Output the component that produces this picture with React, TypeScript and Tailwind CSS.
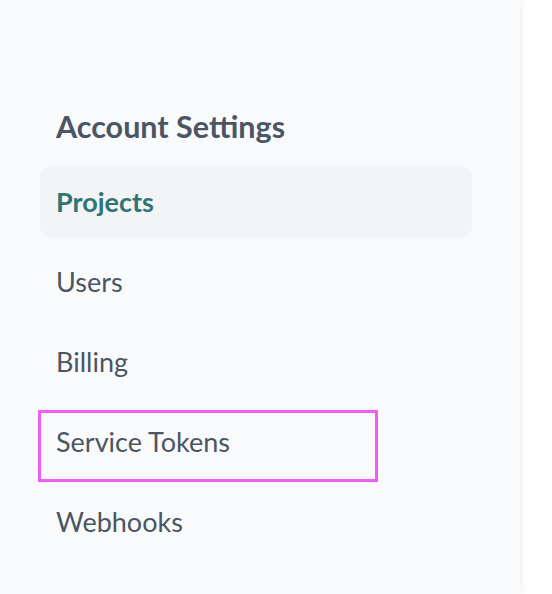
const ITEMS = ['Projects', 'Users', 'Billing', 'Service Tokens', 'Webhooks'];

export default function App() {
    const active = 'Projects';
    return (
        <div className="flex h-[594px] w-[552px] overflow-hidden bg-white" style={{ fontFamily: '"Source Sans Pro", Lato, "Noto Sans", sans-serif' }}>
            <aside className="relative h-full w-[520px] shrink-0 bg-[#f9fafb] shadow-[2px_0_6px_rgba(0,0,0,0.06)]">
                <div className="px-10 pt-[106px]">
                    <h2 className="px-4 text-[30.5px] font-bold leading-[40px] text-[#4b5563]">Account Settings</h2>
                    <nav className="mt-5 flex w-[432px] flex-col gap-2">
                        {ITEMS.map((item) => (
                            <div
                                key={item}
                                className={
                                    item === active
                                        ? 'relative flex h-[72px] items-center rounded-xl bg-[#f3f4f6] px-4 text-[27px] font-bold text-[#2f7574]'
                                        : 'relative flex h-[72px] items-center rounded-xl px-4 text-[27px] text-[#4b5563]'
                                }
                            >
                                {item}
                                {item === 'Service Tokens' && (
                                    <span className="pointer-events-none absolute left-[-2px] top-[4px] h-[72px] w-[340px] border-[3px] border-[#ef5ef2]" />
                                )}
                            </div>
                        ))}
                    </nav>
                </div>
            </aside>
        </div>
    );
}
